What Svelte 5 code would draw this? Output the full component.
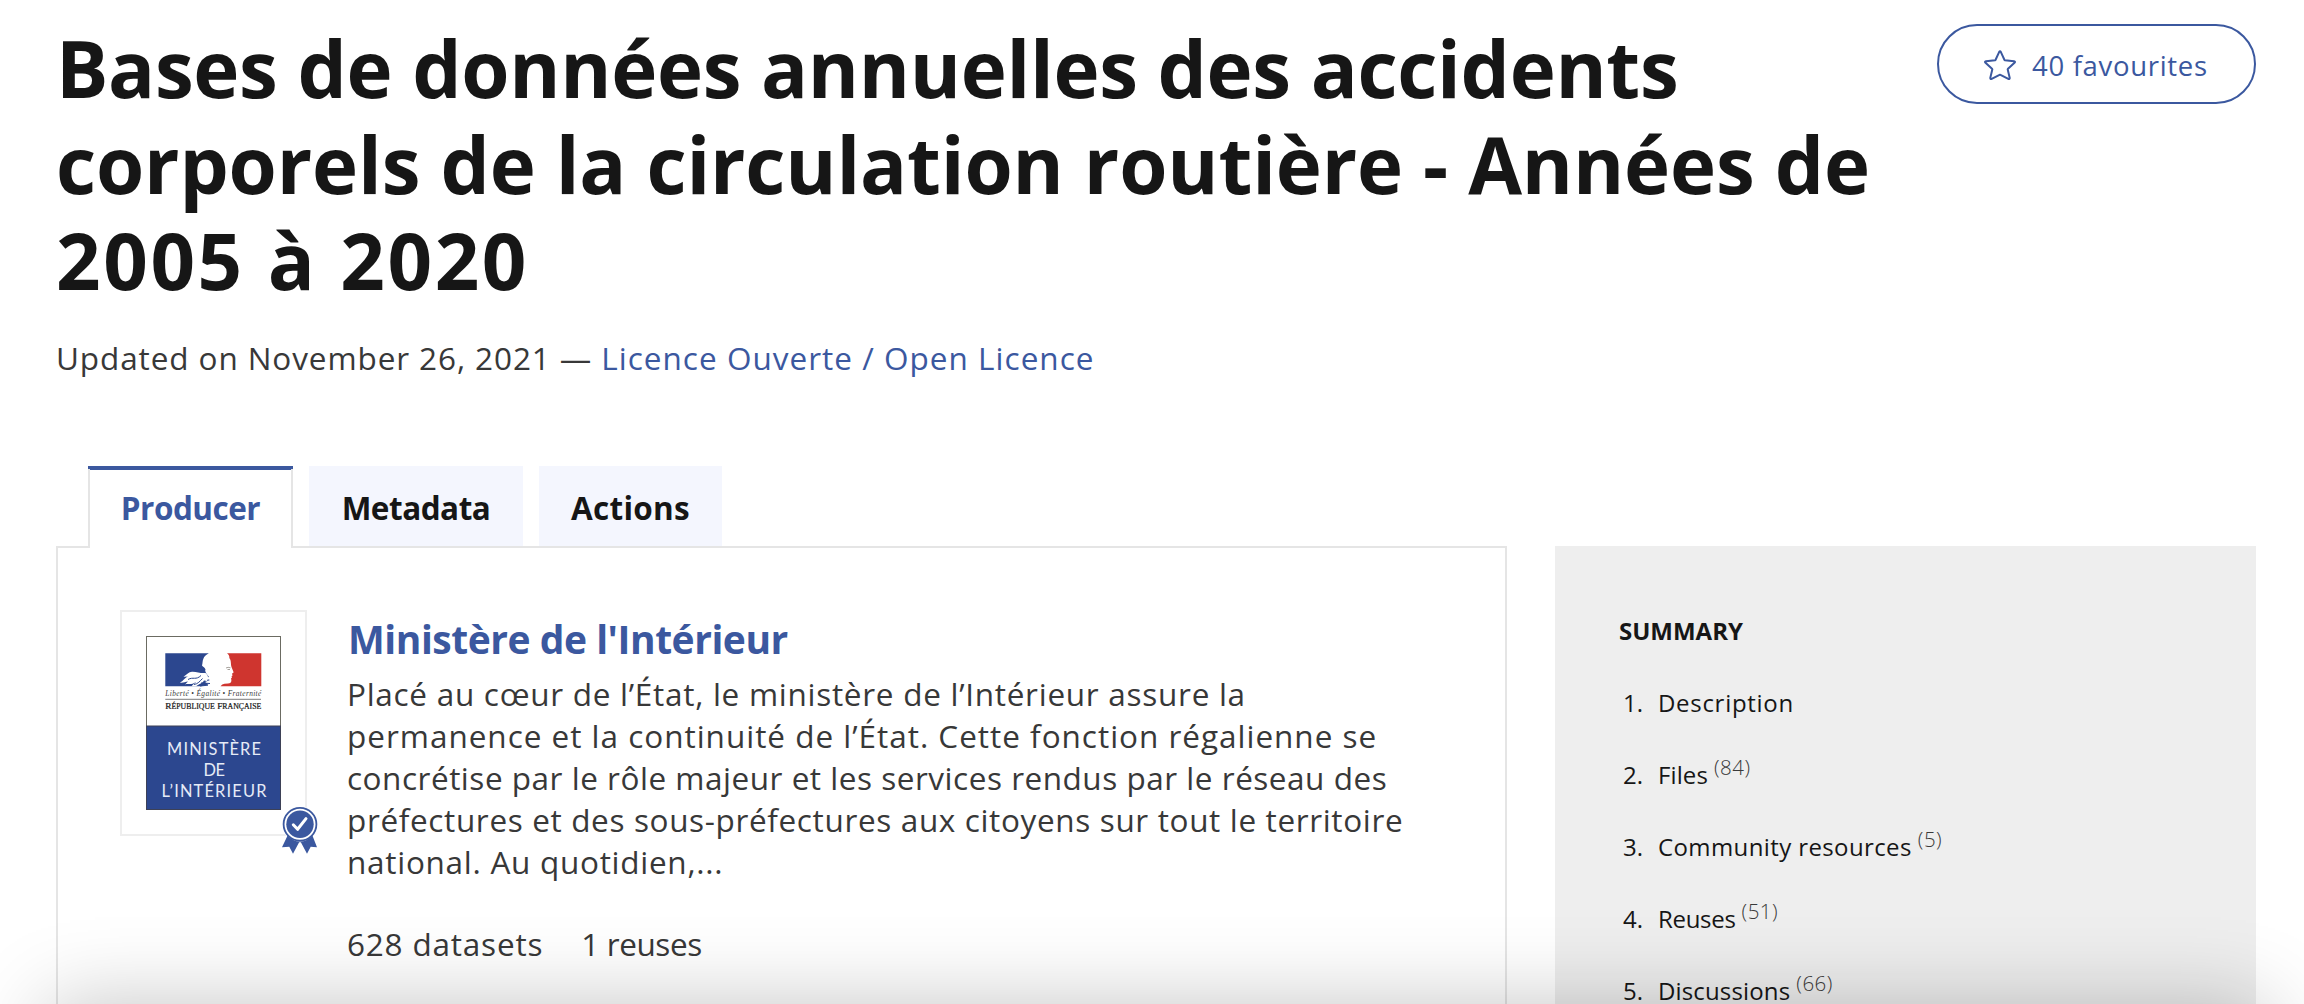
<script>
  const tabs = ['Producer', 'Metadata', 'Actions'];
  let active = $state('Producer');

  const title = [
    { text: 'Bases de données annuelles des accidents', track: -0.32 },
    { text: 'corporels de la circulation routière - Années de', track: -0.14 },
    { text: '2005 à 2020', track: 2.6 }
  ];

  const about = [
    { text: 'Placé au cœur de l’État, le ministère de l’Intérieur assure la', track: 0.72 },
    { text: 'permanence et la continuité de l’État. Cette fonction régalienne se', track: 0.98 },
    { text: 'concrétise par le rôle majeur et les services rendus par le réseau des', track: 0.52 },
    { text: 'préfectures et des sous-préfectures aux citoyens sur tout le territoire', track: 0.64 },
    { text: 'national. Au quotidien,...', track: 0.72 }
  ];

  const summary = [
    { label: 'Description', track: 0.7 },
    { label: 'Files', count: 84, track: 0.1 },
    { label: 'Community resources', count: 5, track: 0.39 },
    { label: 'Reuses', count: 51, track: -0.3 },
    { label: 'Discussions', count: 66, track: 0.15 }
  ];
</script>

<div class="page">
  <header>
    <div class="headline">
      <h1>
        {#each title as line}
          <span class="line" style:letter-spacing="{line.track}px">{line.text}</span>
        {/each}
      </h1>
      <p class="updated">Updated on November 26, 2021 — <a href="#licence">Licence Ouverte / Open Licence</a></p>
    </div>
    <button class="favourite">
      <svg width="32" height="30" viewBox="0 0 32 30" aria-hidden="true">
        <path d="M15.1 2.1Q16 .6 16.9 2.1L20.4 9.7Q20.6 10.1 21 10.2L30 11.2Q31.7 11.6 30.5 12.8L24 18.7Q23.6 19.1 23.7 19.6L25.7 27.8Q25.8 29.5 24.3 28.8L16.5 24.9Q16 24.6 15.5 24.9L7.7 28.8Q6.2 29.5 6.3 27.8L8.3 19.6Q8.4 19.1 8 18.7L1.5 12.8Q.3 11.6 2 11.2L11 10.2Q11.4 10.1 11.6 9.7Z" />
      </svg>
      <span>40 favourites</span>
    </button>
  </header>

  <div class="columns">
    <section class="main">
      <nav class="tabs">
        {#each tabs as tab}
          <button class="tab {tab.toLowerCase()}" class:active={tab === active} onclick={() => (active = tab)}>{tab}</button>
        {/each}
      </nav>
      <div class="panel">
        <div class="logo">
          <svg class="emblem" width="135" height="174" viewBox="0 0 135 174">
            <rect x=".5" y=".5" width="134" height="173" fill="#fff" stroke="#6b6b62" />
            <path fill="#2c478f" d="M19.3 17.3H62.8C60 19 58 20.600 57.500 22.500C56.300 25 56.800 27 56 29.500C57 31 59 31.500 59.500 33.500C58.500 35 60.200 36.500 60.300 37.500L63 41L58 42L64 44L59 46L62.500 48.500L55 50.300H19.300Z" />
            <path fill="#fff" d="M34 46.500C38 44.500 38.500 42 42 40.500L37.500 40.800C41 38.500 42.500 36 46 35.700C51 35.500 54 37.500 59.500 37C62 39 63 42 61 45L58 44.500C57 47 53 48 50 50.300H45.500C47.500 48 49 47.500 50 46C45 49.500 42 47 39 48.500L42 45.500C39 45.500 36.500 47.500 34 46.500Z" />
            <path stroke="#2c478f" fill="none" d="M42 43.500C47 40.500 50 44.500 55 39.500M48 48.500C52 48 54 45 56.500 42.500M55 47L64 47.500M54 50L62 49.200" />
            <path fill="#cf352f" d="M115.300 17.300H81C83 19 83.500 20 83.300 22C85.500 24.500 84.500 27.500 85.500 31L87.500 36Q87.700 37.200 86 37.500L86.500 39.500L85.500 40.500L86 41.500L85 42.500C86 45.500 85 47.500 82 47.500L78.500 47.700Q76 48 74.500 50.300H115.300Z" />
            <path stroke="#8d8880" stroke-width=".8" fill="none" d="M80 32Q82 30.800 84.500 31.800M81.500 33.500H84" />
            <g font-family="Liberation Serif, serif" fill="#3c3c3c">
              <text x="19.300" y="60.400" font-size="7.400" font-style="italic" textLength="96">Liberté • Égalité • Fraternité</text>
              <text x="19.300" y="72.800" fill="#161616" stroke="#161616" stroke-width=".2" font-size="8.800" textLength="96" lengthAdjust="spacingAndGlyphs">R<tspan font-size="7.400">ÉPUBLIQUE</tspan> F<tspan font-size="7.400">RANÇAISE</tspan></text>
            </g>
            <path stroke="#444" stroke-width=".7" d="M19.300 63.300H115" />
            <rect x=".5" y="90" width="134" height="83.500" fill="#2c478f" stroke="#3d4156" />
            <g font-family="Lato, sans-serif" fill="#e6ebf7" font-size="16.400">
              <text x="21" y="118.600" textLength="94">MINISTÈRE</text>
              <text x="57.500" y="139.700" textLength="21.500">DE</text>
              <text x="15.500" y="160.700" textLength="105">L’INTÉRIEUR</text>
            </g>
          </svg>
          <svg class="badge" width="36" height="48" viewBox="0 0 36 48">
            <circle cx="18" cy="18.300" r="18" fill="#fff" />
            <path fill="#3b589f" d="M5.600 29.500L0 41.300L7.300 40.700L11 47.700L17 36.500L18 36L19 36.500L25 47.700L28.700 40.700L35 41.300L30.400 29.500Q25 35.500 18 35.500Q11 35.500 5.600 29.500Z" />
            <circle cx="18" cy="18.300" r="16.400" fill="#fff" stroke="#3b589f" stroke-width="1.800" />
            <circle cx="18" cy="18.300" r="13.700" fill="#3b589f" />
            <path d="M11.300 18.800L15.600 23.300L24 12.600" fill="none" stroke="#fff" stroke-width="3" stroke-linecap="round" stroke-linejoin="round" />
          </svg>
        </div>
        <div class="producer-info">
          <h2>Ministère de l'Intérieur</h2>
          <p>
            {#each about as line}
              <span class="line" style:letter-spacing="{line.track}px">{line.text}</span>
            {/each}
          </p>
          <div class="stats"><span>628 datasets</span><span class="reuses">1 reuses</span></div>
        </div>
      </div>
    </section>

    <aside>
      <h3>SUMMARY</h3>
      <ol>
        {#each summary as item, i}
          <li>
            <span class="number">{i + 1}.</span>
            <span style:letter-spacing="{item.track}px">{item.label}</span>
            {#if item.count}<sup>({item.count})</sup>{/if}
          </li>
        {/each}
      </ol>
    </aside>
  </div>
  <div class="drawer"></div>
</div>

<style>
  :global(body) {
    background: #fff;
    overflow: hidden;
  }
  .page {
    position: relative;
    box-sizing: border-box;
    height: 1004px;
    padding: 20px 48px 0 56px;
    display: flex;
    flex-direction: column;
    overflow: hidden;
    font-family: 'Open Sans', 'Noto Sans', sans-serif;
    color: #383838;
  }
  h1, h2, h3, p, ol { margin: 0; padding: 0; font-size: inherit; }
  button { font: inherit; color: inherit; margin: 0; border: 0; background: none; }
  .line { display: block; white-space: nowrap; }

  header {
    display: flex;
    justify-content: space-between;
    align-items: flex-start;
  }
  h1 {
    font-size: 78px;
    line-height: 96px;
    font-weight: 700;
    color: #161616;
  }
  .updated {
    margin-top: 26px;
    font-size: 31.5px;
    line-height: 48px;
    letter-spacing: 0.9px;
  }
  a { color: #3b589f; text-decoration: none; letter-spacing: 1.02px; }
  .favourite {
    box-sizing: border-box;
    display: flex;
    align-items: center;
    gap: 16px;
    width: 319px;
    height: 80px;
    margin-top: 4px;
    padding: 2px 0 0 45px;
    border: 2px solid #3b589f;
    border-radius: 40px;
    color: #3b589f;
    font-size: 27.5px;
    letter-spacing: 0.69px;
    white-space: nowrap;
  }
  .favourite path { fill: none; stroke: #3b589f; stroke-width: 2; }

  .columns {
    flex: 1;
    display: grid;
    grid-template-columns: 1451px 701px;
    gap: 48px;
    margin-top: 84px;
  }
  .main { display: flex; flex-direction: column; }
  .tabs {
    display: flex;
    gap: 16px;
    height: 80px;
    padding-left: 32px;
  }
  .tab {
    box-sizing: border-box;
    height: 80px;
    padding: 4px 0 0;
    background: #f4f6fe;
    color: #161616;
    font-size: 31.5px;
    line-height: 76px;
    font-weight: 700;
    letter-spacing: -0.5px;
  }
  .producer { width: 205px; }
  .metadata { width: 214px; }
  .actions { width: 183px; letter-spacing: 0.25px; }
  .tab.active {
    z-index: 1;
    height: 82px;
    padding-top: 2px;
    border: 2px solid #e5e5e5;
    border-width: 0 2px;
    background: linear-gradient(#3b589f 4px, #fff 4px);
    background-origin: border-box;
    border-image: linear-gradient(#3b589f 4px, #e5e5e5 4px) 1;
    color: #3b589f;
  }
  .panel {
    flex: 1;
    display: flex;
    align-items: flex-start;
    gap: 40px;
    padding: 62px;
    border: 2px solid #e5e5e5;
    border-bottom: 0;
  }
  .logo {
    position: relative;
    flex: none;
    box-sizing: border-box;
    width: 187px;
    height: 226px;
    padding: 24px;
    border: 2px solid #eee;
  }
  .emblem { display: block; }
  .badge { position: absolute; left: 160px; top: 194px; }
  .producer-info { padding-top: 5px; }
  h2 {
    padding-left: 1px;
    font-size: 39px;
    line-height: 48px;
    font-weight: 700;
    letter-spacing: -0.47px;
    color: #3b589f;
  }
  .producer-info p {
    margin-top: 10px;
    font-size: 31.5px;
    line-height: 42px;
  }
  .stats {
    display: flex;
    gap: 38px;
    margin-top: 37px;
    font-size: 31.5px;
    line-height: 48px;
    letter-spacing: 0.8px;
  }
  .reuses { letter-spacing: -0.4px; }

  aside {
    margin-top: 80px;
    padding: 65px 0 0 64px;
    background: #eee;
    color: #161616;
    font-size: 24px;
    line-height: 40px;
  }
  h3 { font-weight: 700; letter-spacing: 0; }
  ol {
    display: flex;
    flex-direction: column;
    gap: 32px;
    margin-top: 32px;
    padding-left: 4px;
    list-style: none;
  }
  li { display: flex; height: 40px; }
  .number { width: 35px; }
  sup {
    margin: -8px 0 0 6px;
    vertical-align: baseline;
    font-size: 20.5px;
    font-weight: 300;
    letter-spacing: 0.5px;
    color: #3a3a3a;
  }
  .drawer {
    position: absolute;
    left: 48px;
    right: 36px;
    top: 100%;
    height: 300px;
    box-shadow: 0 0 80px rgba(0, 0, 0, 0.23);
  }
</style>
